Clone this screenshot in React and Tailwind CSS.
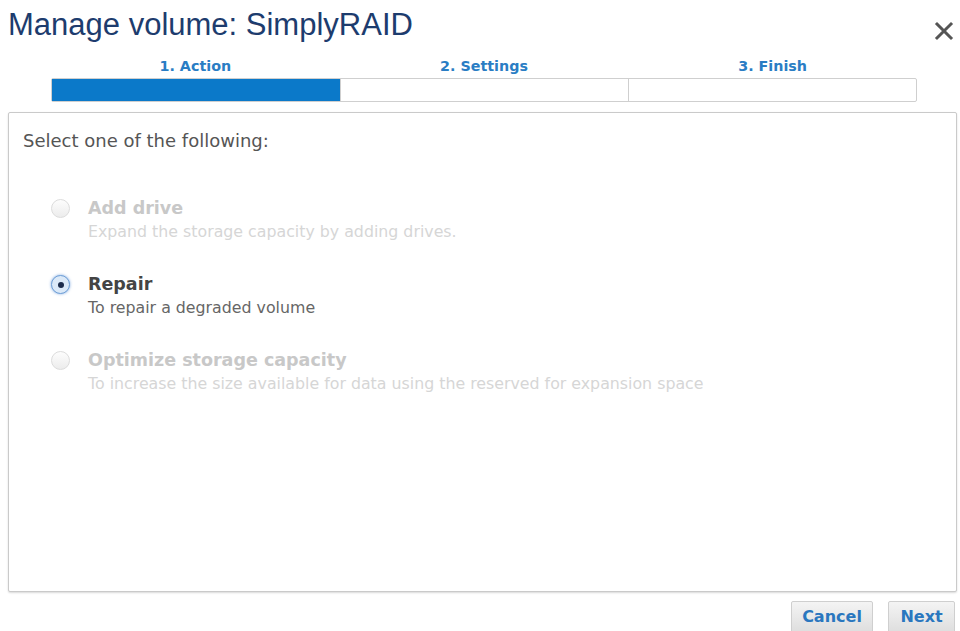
import React, { useState } from 'react';

const steps = ['1. Action', '2. Settings', '3. Finish'];

const options = [
  {
    id: 'add',
    title: 'Add drive',
    detail: 'Expand the storage capacity by adding drives.',
    disabled: true,
  },
  {
    id: 'repair',
    title: 'Repair',
    detail: 'To repair a degraded volume',
    disabled: false,
  },
  {
    id: 'optimize',
    title: 'Optimize storage capacity',
    detail: 'To increase the size available for data using the reserved for expansion space',
    disabled: true,
  },
];

export default function App() {
  const [choice, setChoice] = useState('repair');

  return (
    <div className="h-[631px] w-[960px] overflow-hidden bg-white font-['DejaVu_Sans',Verdana,sans-serif]">
      <header className="flex items-start justify-between pl-[8px] pr-[5px] pt-[6px]">
        <h1 className="font-['Liberation_Sans',Arial,sans-serif] text-[31px] leading-[38px] text-[#1d3c6e]">
          Manage volume: SimplyRAID
        </h1>
        <button type="button" className="mt-[14px] text-[#555]" aria-label="Close">
          <svg width="22" height="22" viewBox="0 0 22 22" fill="none">
            <path d="M4 4L18 18M18 4L4 18" stroke="currentColor" strokeWidth="3" strokeLinecap="square" />
          </svg>
        </button>
      </header>

      <div className="ml-[51px] mt-[13px] w-[866px]">
        <div className="grid grid-cols-3 text-center text-[14.3px] font-bold leading-[18px] text-[#2a7dc4]">
          {steps.map((s) => (
            <span key={s}>{s}</span>
          ))}
        </div>
        <div className="mt-[3px] grid h-[24px] grid-cols-3 rounded-[2px] border border-[#cfcfcf] bg-white">
          <div className="bg-[#0b79c9]" />
          <div className="border-l border-[#cfcfcf]" />
          <div className="border-l border-[#cfcfcf]" />
        </div>
      </div>

      <section className="ml-[8px] mt-[10px] h-[480px] w-[949px] rounded-[2px] border border-[#cacaca] bg-white px-[14px] pt-[17px] shadow-[0_1px_2px_rgba(0,0,0,0.15)]">
        <p className="text-[18px] leading-[22px] text-[#555]">Select one of the following:</p>

        <div className="mt-[44px] flex flex-col gap-[30px] pl-[28px]">
          {options.map((o) => {
            const checked = choice === o.id;
            return (
              <label
                key={o.id}
                className={`flex items-start gap-[19px] ${o.disabled ? 'text-[#c8c8c8]' : 'cursor-pointer'}`}
              >
                <span
                  onClick={() => !o.disabled && setChoice(o.id)}
                  className={`mt-[3px] flex h-[19px] w-[19px] shrink-0 items-center justify-center rounded-full border ${
                    checked
                      ? 'border-[#6f9fd6] bg-[#dbe9f8] shadow-[0_0_3px_rgba(70,130,210,0.7)]'
                      : 'border-[#dcdcdc] bg-gradient-to-b from-[#fdfdfd] to-[#ececec]'
                  }`}
                >
                  {checked && <span className="h-[6px] w-[6px] rounded-full bg-[#1c2c4c]" />}
                </span>
                <span className="-ml-[1px] flex flex-col">
                  <span className={`text-[17.5px] font-bold leading-[24px] ${o.disabled ? '' : 'text-[#444]'}`}>
                    {o.title}
                  </span>
                  <span
                    className={`mt-[2px] text-[15.8px] leading-[20px] ${o.disabled ? 'text-[#d6d6d6]' : 'text-[#666]'}`}
                  >
                    {o.detail}
                  </span>
                </span>
              </label>
            );
          })}
        </div>
      </section>

      <footer className="mr-[5px] mt-[9px] flex justify-end gap-[15px]">
        <button
          type="button"
          className="h-[32px] w-[82px] rounded-[2px] border border-[#cfcfcf] bg-gradient-to-b from-[#f4f4f4] to-[#dedede] text-[16px] font-bold text-[#2a77bf]"
        >
          Cancel
        </button>
        <button
          type="button"
          className="h-[32px] w-[67px] rounded-[2px] border border-[#cfcfcf] bg-gradient-to-b from-[#f4f4f4] to-[#dedede] text-[16px] font-bold text-[#2a77bf]"
        >
          Next
        </button>
      </footer>
    </div>
  );
}
